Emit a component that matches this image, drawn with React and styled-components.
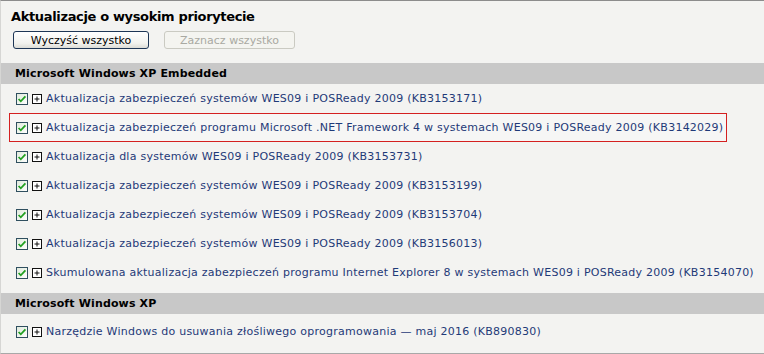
import React from 'react';
import styled, { createGlobalStyle } from 'styled-components';

const COLORS = {
  page: '#f3f3f1',
  band: '#c8c8c8',
  link: '#1f3a78',
  border: '#8c8c8c',
  red: '#d42020',
};

const GlobalStyle = createGlobalStyle`
  html, body {
    margin: 0;
    padding: 0;
    background: ${COLORS.page};
  }
  body {
    font-family: "DejaVu Sans", Verdana, sans-serif;
  }
`;

const Panel = styled.div`
  width: 764px;
  height: 354px;
  box-sizing: border-box;
  background: ${COLORS.page};
  border-top: 1px solid ${COLORS.border};
  border-left: 1px solid #d6d6d4;
  border-bottom: 1px solid #a8a8a8;
  overflow: hidden;
`;

const Top = styled.div`
  padding: 6px 0 0 10px;
  height: 62px;
  box-sizing: border-box;
`;

const Title = styled.h1`
  margin: 0;
  font-size: 13px;
  letter-spacing: -0.35px;
  font-weight: bold;
  color: #000;
  line-height: 20px;
`;

const ButtonRow = styled.div`
  display: flex;
  gap: 15px;
  margin-top: 4px;
  padding-left: 2px;
`;

const Button = styled.button`
  width: ${(p) => p.w}px;
  height: 18px;
  padding: 0;
  font-family: "DejaVu Sans", Verdana, sans-serif;
  font-size: 11px;
  border-radius: 3px;
  border: 1px solid ${(p) => (p.disabled ? '#cacac2' : '#1e3656')};
  color: ${(p) => (p.disabled ? '#a9a9a2' : '#000')};
  background: ${(p) =>
    p.disabled ? '#f4f4f0' : 'linear-gradient(#ffffff, #f2f2ee 70%, #dcdcd6)'};
`;

const Band = styled.div`
  height: 21px;
  background: ${COLORS.band};
  display: flex;
  align-items: center;
  padding-left: 14px;
  font-size: 11px;
  letter-spacing: 0.15px;
  font-weight: bold;
  color: #000;
`;

const List = styled.div`
  display: flex;
  flex-direction: column;
  padding: ${(p) => (p.last ? '3px' : '0')} 0 6px 8px;
`;

const Row = styled.div`
  display: flex;
  align-items: center;
  gap: 4px;
  height: 29px;
  box-sizing: border-box;
  width: ${(p) => (p.selected ? '718px' : 'auto')};
  padding-left: ${(p) => (p.selected ? '6px' : '7px')};
  border: ${(p) => (p.selected ? `1px solid ${COLORS.red}` : 'none')};
  background: ${(p) => (p.selected ? '#f6f6f5' : 'transparent')};
`;

const Label = styled.a`
  font-size: 11px;
  letter-spacing: 0.25px;
  color: ${COLORS.link};
  text-decoration: none;
  white-space: nowrap;
`;

function Check() {
  return (
    <svg width="12" height="12" viewBox="0 0 12 12">
      <defs>
        <linearGradient id="cbg" x1="0" y1="0" x2="1" y2="1">
          <stop offset="0" stopColor="#dfe9dc" />
          <stop offset="1" stopColor="#ffffff" />
        </linearGradient>
      </defs>
      <rect x="0.5" y="0.5" width="11" height="11" fill="url(#cbg)" stroke="#2f4f5f" />
      <path d="M2.6 6 L4.8 8.3 L9.4 3.4" fill="none" stroke="#21a021" strokeWidth="1.8" />
    </svg>
  );
}

function Plus() {
  return (
    <svg width="10" height="10" viewBox="0 0 10 10">
      <rect x="0.5" y="0.5" width="9" height="9" fill="#fff" stroke="#111" />
      <path d="M2.5 5 H7.5 M5 2.5 V7.5" stroke="#111" strokeWidth="1" />
    </svg>
  );
}

const sections = [
  {
    name: 'Microsoft Windows XP Embedded',
    items: [
      'Aktualizacja zabezpieczeń systemów WES09 i POSReady 2009 (KB3153171)',
      'Aktualizacja zabezpieczeń programu Microsoft .NET Framework 4 w systemach WES09 i POSReady 2009 (KB3142029)',
      'Aktualizacja dla systemów WES09 i POSReady 2009 (KB3153731)',
      'Aktualizacja zabezpieczeń systemów WES09 i POSReady 2009 (KB3153199)',
      'Aktualizacja zabezpieczeń systemów WES09 i POSReady 2009 (KB3153704)',
      'Aktualizacja zabezpieczeń systemów WES09 i POSReady 2009 (KB3156013)',
      'Skumulowana aktualizacja zabezpieczeń programu Internet Explorer 8 w systemach WES09 i POSReady 2009 (KB3154070)',
    ],
  },
  {
    name: 'Microsoft Windows XP',
    items: ['Narzędzie Windows do usuwania złośliwego oprogramowania — maj 2016 (KB890830)'],
  },
];

export default function App() {
  return (
    <>
      <GlobalStyle />
      <Panel>
        <Top>
          <Title>Aktualizacje o wysokim priorytecie</Title>
          <ButtonRow>
            <Button w={136}>Wyczyść wszystko</Button>
            <Button w={131} disabled>
              Zaznacz wszystko
            </Button>
          </ButtonRow>
        </Top>
        {sections.map((s, si) => (
          <div key={s.name}>
            <Band>{s.name}</Band>
            <List last={si === sections.length - 1}>
              {s.items.map((t, i) => (
                <Row key={t} selected={s.items.length > 1 && i === 1}>
                  <Check />
                  <Plus />
                  <Label href="#">{t}</Label>
                </Row>
              ))}
            </List>
          </div>
        ))}
      </Panel>
    </>
  );
}
